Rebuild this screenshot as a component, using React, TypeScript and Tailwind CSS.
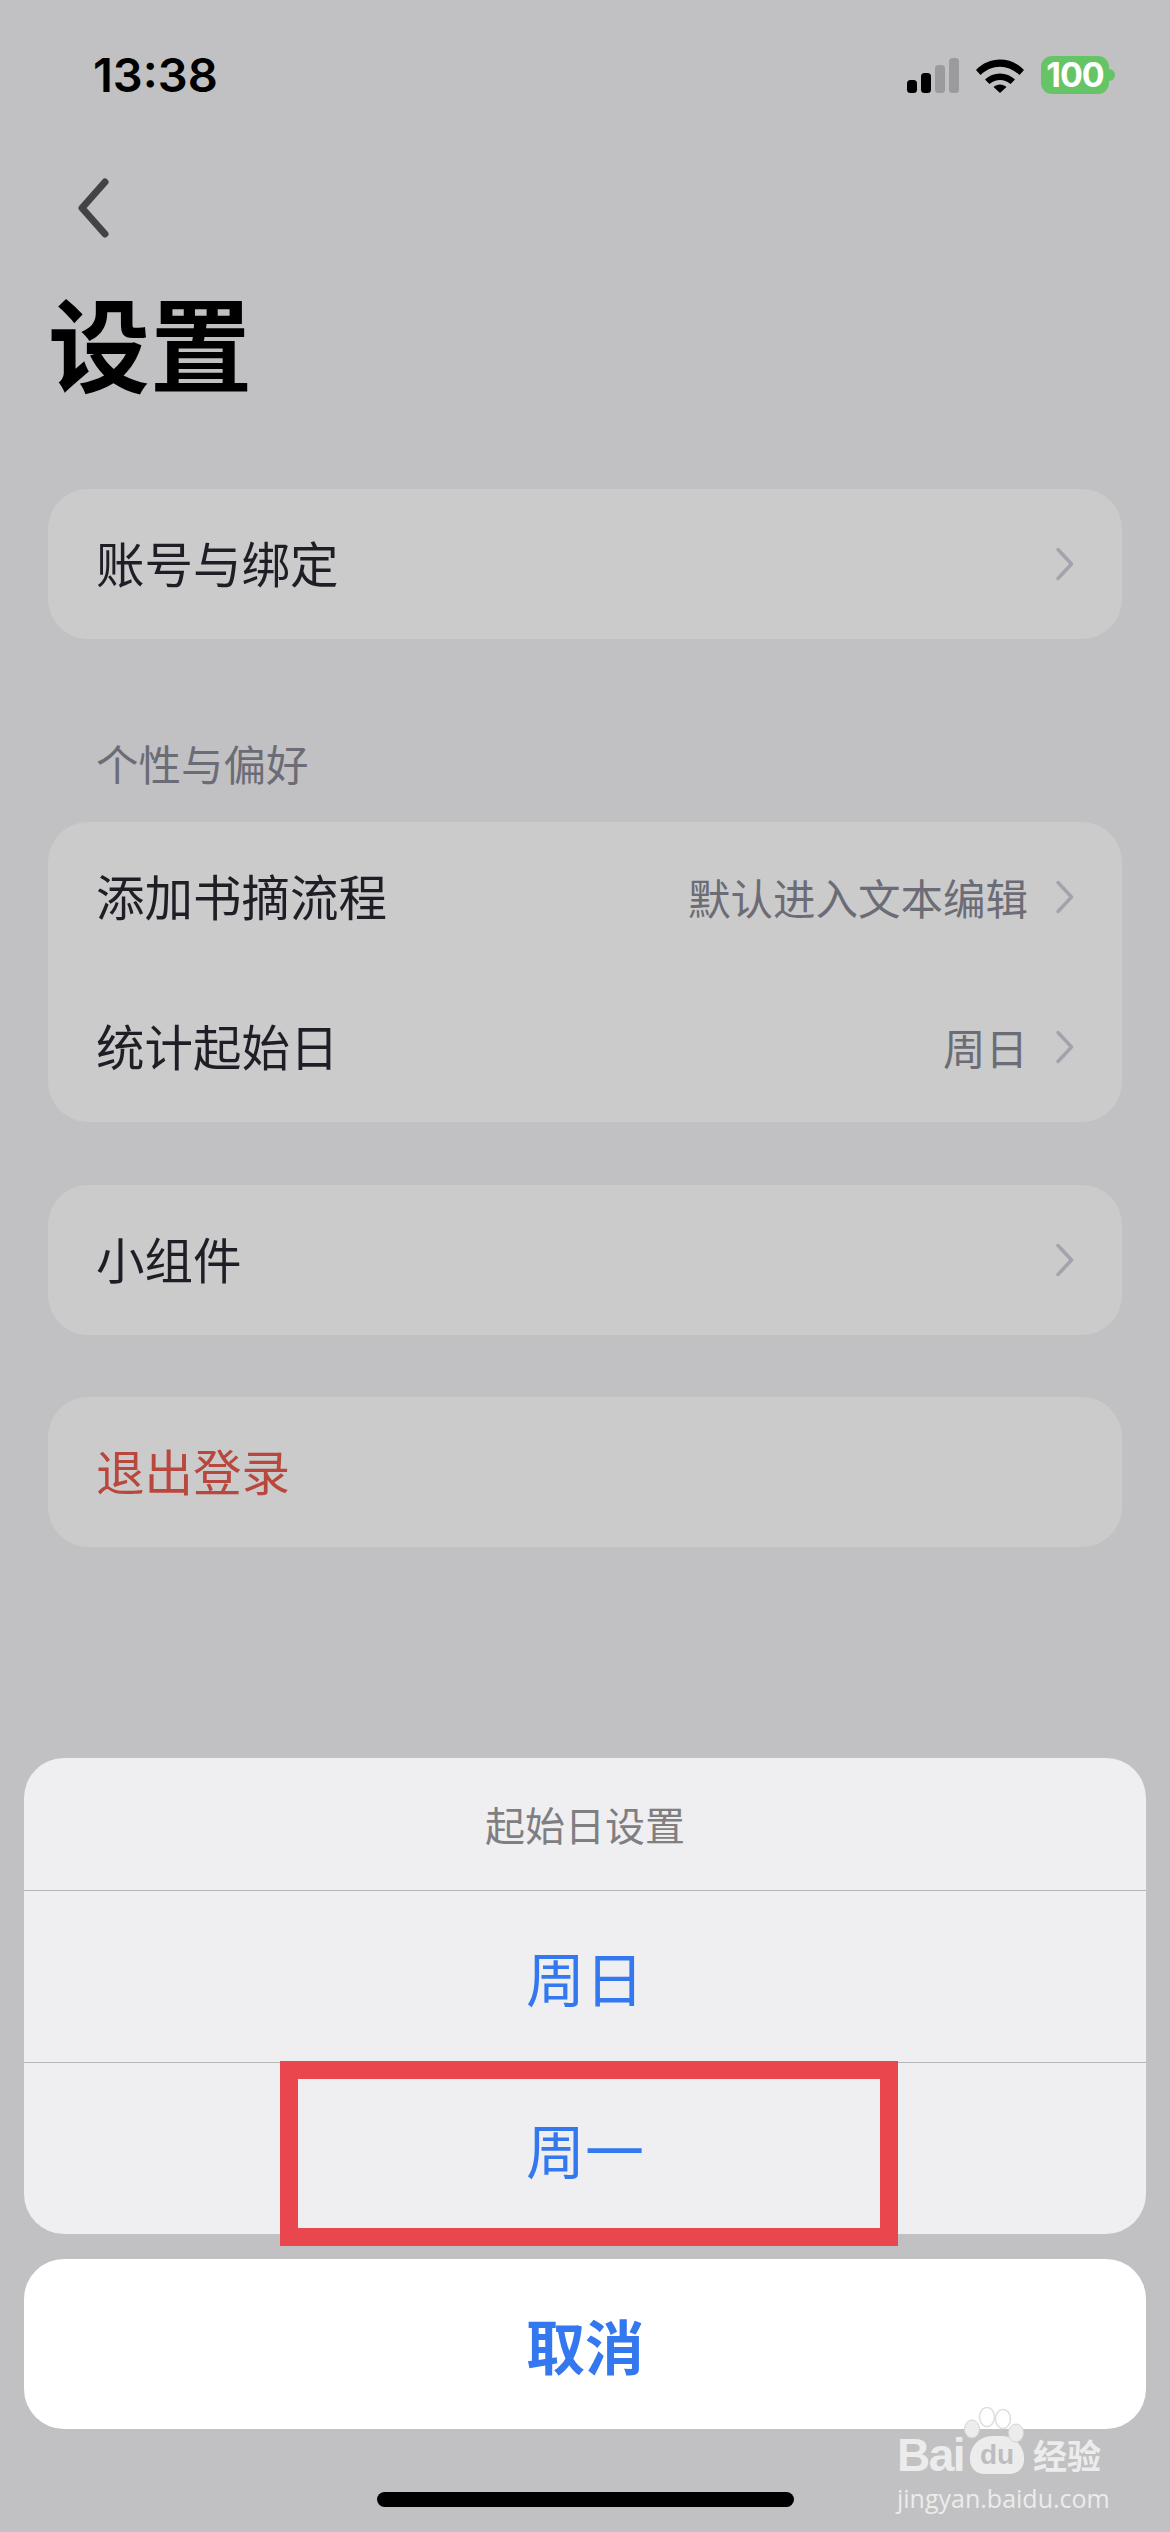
import React from "react";

const cjk = "font-['Noto_Sans_CJK_SC','Noto_Sans',sans-serif]";

function Chevron() {
  return (
    <svg width="20" height="34" viewBox="0 0 20 34" fill="none" className="shrink-0">
      <path d="M3 2.5 L16.5 17 L3 31.5" stroke="#a3a3ae" strokeWidth="3.5" strokeLinecap="round" strokeLinejoin="round" />
    </svg>
  );
}

function Row({ label, value, color = "text-[#1e1e26]", arrow = true }: { label: string; value?: string; color?: string; arrow?: boolean }) {
  return (
    <div className="flex h-[150px] items-center pl-[48px] pr-[47px]">
      <span className={`mb-[3px] flex-1 text-[48.5px] leading-none ${color}`}>{label}</span>
      {value && <span className="mr-[27px] text-[42.5px] leading-none text-[#6c6c76]">{value}</span>}
      {arrow && <Chevron />}
    </div>
  );
}

function Card({ children, className = "" }: { children: React.ReactNode; className?: string }) {
  return <div className={`mx-[48px] rounded-[40px] bg-[#cbcbcb] ${className}`}>{children}</div>;
}

function StatusBar() {
  return (
    <div className="flex h-[38px] items-center justify-between pl-[93px] pr-[55px]">
      <span className="mb-[2px] font-['Inter',sans-serif] text-[47px] leading-none font-semibold text-black">13:38</span>
      <div className="flex items-center">
        <svg width="52" height="36" viewBox="0 0 52 36" className="mr-[16px]">
          <rect x="0" y="23" width="10" height="13" rx="3.5" fill="#000" />
          <rect x="14" y="16" width="10" height="20" rx="3.5" fill="#000" />
          <rect x="28" y="8" width="10" height="28" rx="3.5" fill="#9b9b9d" />
          <rect x="42" y="1" width="10" height="35" rx="3.5" fill="#9b9b9d" />
        </svg>
        <svg width="50" height="36" viewBox="0 0 50 36" className="mr-[16px]">
          <path d="M1 13 C14 -1 36 -1 49 13 L44.5 18 C33 7 17 7 5.5 18 Z" fill="#000" />
          <path d="M10 22.5 C18 14.5 32 14.5 40 22.5 L35.5 27 C29 21.5 21 21.5 14.500 27 Z" fill="#000" />
          <path d="M18.500 30 C22 26.500 28 26.500 31.500 30 L25 36 Z" fill="#000" />
        </svg>
        <div className="flex items-center">
          <div className="flex h-[38px] w-[68px] items-center justify-center rounded-[11px] bg-[#65c466] font-['Inter',sans-serif] text-[34px] leading-none font-bold tracking-[-1px] text-white">
            100
          </div>
          <div className="h-[12px] w-[6px] rounded-r-full bg-[#65c466]" />
        </div>
      </div>
    </div>
  );
}

function Watermark() {
  return (
    <div className="absolute top-[2407px] left-[897px] flex w-[206px] flex-col items-start text-[#ececec]">
      <svg width="64" height="36" viewBox="0 0 64 36" fill="#ececec" stroke="#d4d4d4" strokeWidth="1" className="absolute top-0 left-[66px]">
        <ellipse cx="9" cy="22" rx="7.500" ry="9" />
        <ellipse cx="24" cy="10" rx="7.500" ry="9.500" fill="none" stroke="#dedede" strokeWidth="1.500" />
        <ellipse cx="40" cy="12" rx="7.500" ry="9.500" fill="none" stroke="#dedede" strokeWidth="1.500" />
        <ellipse cx="53" cy="26" rx="7.500" ry="9" />
      </svg>
      <div className="mt-[28px] flex h-[40px] items-center">
        <span className="font-['Liberation_Sans',sans-serif] text-[46px] leading-none font-bold tracking-[-1.500px]">Bai</span>
        <span className="ml-[6px] flex h-[38px] w-[54px] items-center justify-center rounded-t-[22px] rounded-b-[14px] bg-[#ececec] font-['Liberation_Sans',sans-serif] text-[28px] leading-none font-bold text-[#bdbdbf]">
          du
        </span>
        <span className="ml-[9px] text-[34px] leading-none font-bold whitespace-nowrap">经验</span>
      </div>
      <span className="mt-[11px] font-['Open_Sans',sans-serif] text-[25px] leading-none whitespace-nowrap">jingyan.baidu.com</span>
    </div>
  );
}

function ActionSheet() {
  return (
    <div className="mx-[24px]">
      <div className="relative rounded-[40px] bg-[#efeff1]">
        <div className="flex h-[133px] items-center justify-center border-b border-[#b5b5b7] text-[40px] leading-none text-[#7f7f81]">
          起始日设置
        </div>
        <div className="flex h-[172px] items-center justify-center border-b border-[#b5b5b7] text-[59px] leading-none text-[#3478f0]">
          周日
        </div>
        <div className="flex h-[171px] items-center justify-center text-[59px] leading-none text-[#3478f0]">周一</div>
        <div className="absolute top-[303px] left-[256px] h-[185px] w-[618px] border-[18px] border-[#e9464d]" />
      </div>
      <div className="mt-[25px] flex h-[170px] items-center justify-center rounded-[40px] bg-white text-[59px] leading-none font-bold text-[#3478f0]">
        取消
      </div>
    </div>
  );
}

export default function App() {
  return (
    <div className={`relative h-[2532px] w-[1170px] overflow-hidden bg-[#c1c1c3] ${cjk}`}>
      <div className="pt-[56px]">
        <StatusBar />
      </div>

      <div className="mt-[84px] pl-[75px]">
        <svg width="36" height="60" viewBox="0 0 36 60" fill="none">
          <path d="M30 4 L7 30 L30 56" stroke="#434345" strokeWidth="7" strokeLinecap="round" strokeLinejoin="round" />
        </svg>
      </div>

      <h1 className="mt-[48px] h-[110px] pl-[48px] text-[102px] leading-[110px] font-bold text-black">设置</h1>

      <Card className="mt-[93px]">
        <Row label="账号与绑定" />
      </Card>

      <div className="mt-[102px] h-[44px] pl-[96px] text-[42.5px] leading-[44px] text-[#6c6c76]">个性与偏好</div>

      <Card className="mt-[37px]">
        <Row label="添加书摘流程" value="默认进入文本编辑" />
        <Row label="统计起始日" value="周日" />
      </Card>

      <Card className="mt-[63px]">
        <Row label="小组件" />
      </Card>

      <Card className="mt-[62px]">
        <Row label="退出登录" color="text-[#b8483e]" arrow={false} />
      </Card>

      <div className="mt-[211px]">
        <ActionSheet />
      </div>

      <div className="mx-auto mt-[63px] h-[15px] w-[417px] rounded-full bg-black" />

      <Watermark />
    </div>
  );
}
